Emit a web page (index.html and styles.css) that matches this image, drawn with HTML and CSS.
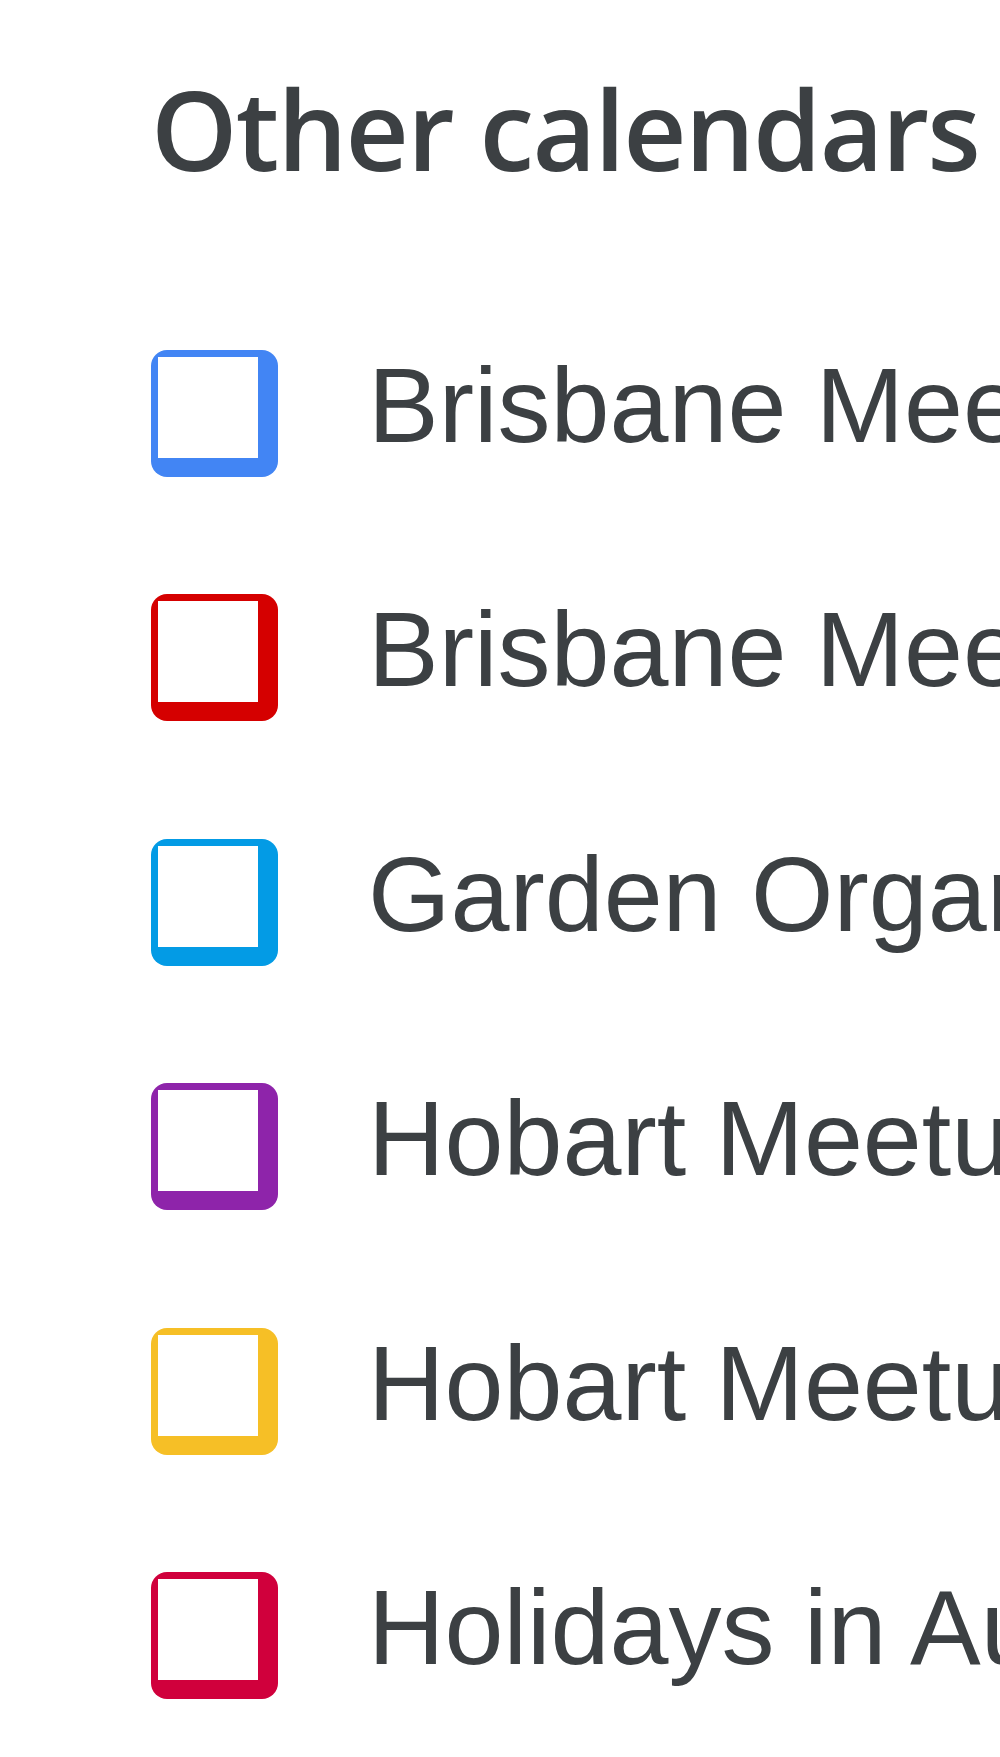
FILE: index.html
```html
<!DOCTYPE html>
<html lang="en">
<head>
<meta charset="utf-8">
<title>Other calendars</title>
<link rel="stylesheet" href="styles.css">
</head>
<body>
<main class="panel">
  <h2 class="heading">Other calendars</h2>
  <ul class="cal-list">
    <li class="cal-row"><span class="box box-blue"><span class="box-inner"></span></span><span class="label">Brisbane Meetup</span></li>
    <li class="cal-row"><span class="box box-red"><span class="box-inner"></span></span><span class="label">Brisbane Meetup Events</span></li>
    <li class="cal-row"><span class="box box-peacock"><span class="box-inner"></span></span><span class="label">Garden Organisers</span></li>
    <li class="cal-row"><span class="box box-grape"><span class="box-inner"></span></span><span class="label">Hobart Meetup</span></li>
    <li class="cal-row"><span class="box box-banana"><span class="box-inner"></span></span><span class="label">Hobart Meetup Events</span></li>
    <li class="cal-row"><span class="box box-crimson"><span class="box-inner"></span></span><span class="label">Holidays in Australia</span></li>
  </ul>
</main>
</body>
</html>
```
FILE: styles.css
```css
html, body {
  margin: 0;
  padding: 0;
  background: #ffffff;
  overflow: hidden;
}

.panel {
  padding-left: 151px;
  padding-top: 63px;
  color: #3c4043;
}

.heading {
  margin: 0;
  padding-left: 0;
  font-family: "Open Sans", "Liberation Sans", Arial, sans-serif;
  font-size: 110px;
  font-weight: 600;
  letter-spacing: -1.8px;
  line-height: 130px;
  white-space: nowrap;
  color: #3c4043;
}

.cal-list {
  list-style: none;
  margin: 98.5px 0 0 0;
  padding: 0;
}

.cal-row {
  display: flex;
  align-items: flex-start;
  height: 244.4px;
  padding-top: 58.5px;
  box-sizing: border-box;
  gap: 90px;
  white-space: nowrap;
}

.box {
  flex: none;
  display: flex;
  width: 127px;
  height: 127px;
  box-sizing: border-box;
  padding: 7px 20px 19px 7px;
  border-radius: 16px;
}

.box-inner {
  flex: 1;
  background: #ffffff;
}

.box-blue { background: #4285f4; }
.box-red { background: #d50000; }
.box-peacock { background: #039be5; }
.box-grape { background: #8e24aa; }
.box-banana { background: #f6bf26; }
.box-crimson { background: #d0003c; }

.label {
  font-family: "Liberation Sans", Arial, sans-serif;
  font-size: 106px;
  font-weight: 400;
  line-height: 127px;
  margin-top: -8px;
  color: #3c4043;
}
```
